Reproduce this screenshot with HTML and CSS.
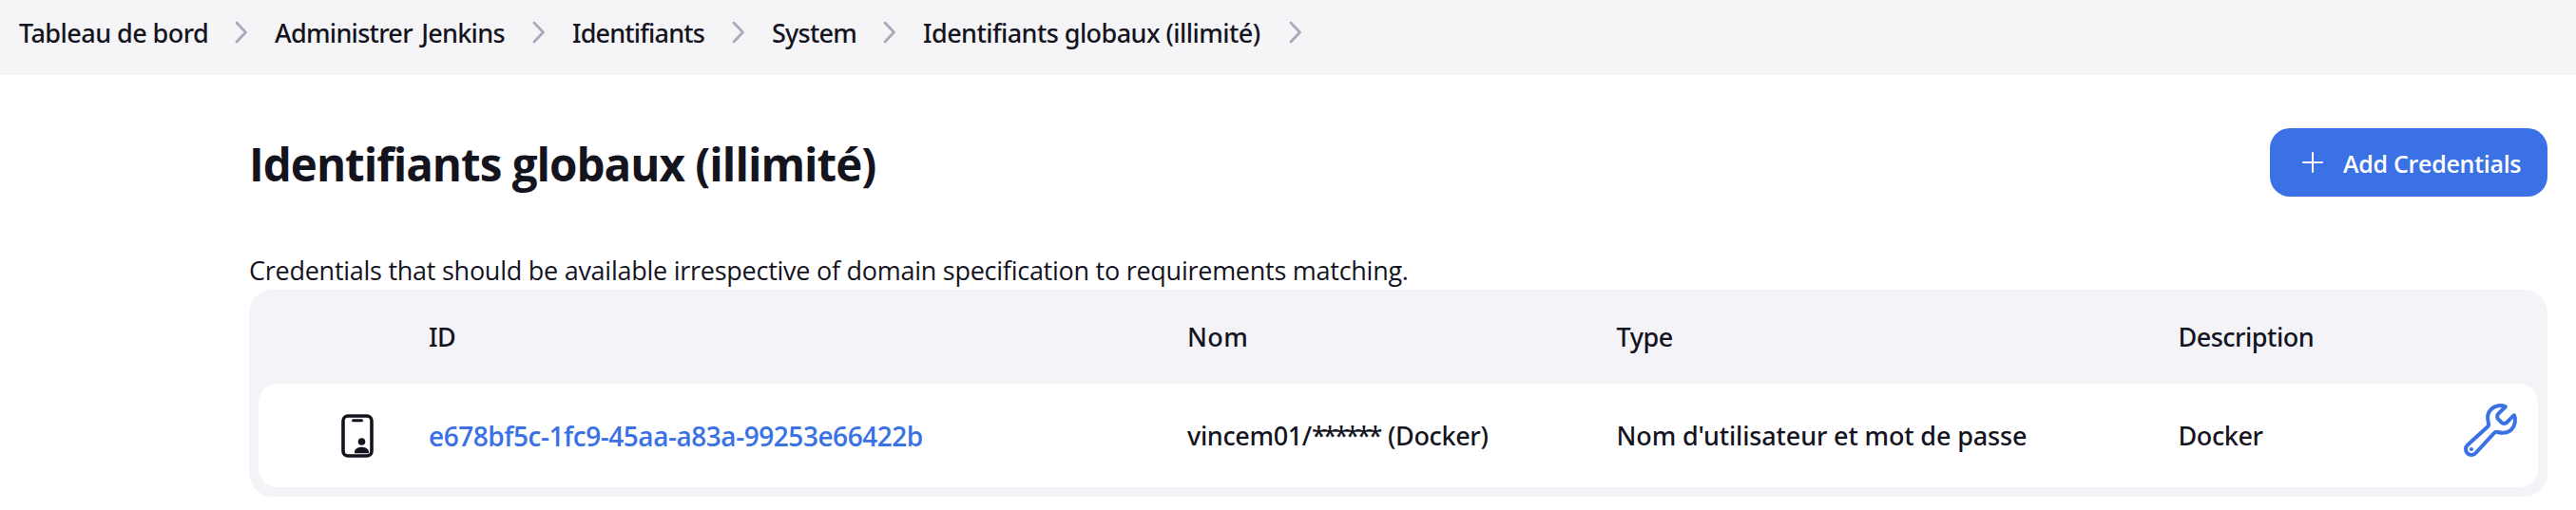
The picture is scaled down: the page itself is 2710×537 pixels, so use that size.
FILE: index.html
```
<!DOCTYPE html>
<html lang="fr">
<head>
<meta charset="utf-8">
<title>Identifiants globaux (illimité)</title>
<link rel="stylesheet" href="styles.css">
</head>
<body>
<nav class="crumbs">
  <a class="crumb crumb-home">Tableau de bord</a>
  <svg class="chevron" viewBox="0 0 14 24"><path d="M2 2l9.5 10L2 22"/></svg>
  <a class="crumb crumb-admin">Administrer Jenkins</a>
  <svg class="chevron" viewBox="0 0 14 24"><path d="M2 2l9.5 10L2 22"/></svg>
  <a class="crumb crumb-ids">Identifiants</a>
  <svg class="chevron" viewBox="0 0 14 24"><path d="M2 2l9.5 10L2 22"/></svg>
  <a class="crumb crumb-system">System</a>
  <svg class="chevron" viewBox="0 0 14 24"><path d="M2 2l9.5 10L2 22"/></svg>
  <a class="crumb crumb-global">Identifiants globaux (illimité)</a>
  <svg class="chevron" viewBox="0 0 14 24"><path d="M2 2l9.5 10L2 22"/></svg>
</nav>
<main class="page">
  <header class="app-bar">
    <h1 class="title">Identifiants globaux (illimité)</h1>
    <a class="button">
      <svg class="plus" viewBox="0 0 22 22"><path d="M11 1v20M1 11h20"/></svg>
      <span>Add Credentials</span>
    </a>
  </header>
  <p class="description">Credentials that should be available irrespective of domain specification to requirements matching.</p>
  <section class="table">
    <div class="row head">
      <span></span><span>ID</span><span class="nom">Nom</span><span>Type</span><span>Description</span><span></span>
    </div>
    <div class="row body">
      <svg class="credential" viewBox="0 0 34 46">
        <rect class="phone" x="2" y="2" width="30" height="42" rx="5"/>
        <rect x="11" y="5.3" width="12" height="3" rx="1.5"/>
        <circle cx="21.5" cy="29" r="3.8"/>
        <path d="M14 41.3v-1.3c0-3.2 3.2-5.3 7.5-5.3s7.5 2.1 7.5 5.3v1.3z"/>
      </svg>
      <a class="id">e678bf5c-1fc9-45aa-a83a-99253e66422b</a>
      <span class="user">vincem01/<span class="stars">******</span> (Docker)</span>
      <span class="type">Nom d'utilisateur et mot de passe</span>
      <span class="docker">Docker</span>
      <svg class="wrench" viewBox="0 0 512 512">
        <path d="M393.87 190a32.1 32.1 0 01-45.25 0l-26.57-26.57a32.09 32.09 0 010-45.26L382.19 58a1 1 0 00-.3-1.64c-38.82-16.64-89.15-8.16-121.11 23.57-30.58 30.35-32.32 76-21.12 115.84a31.93 31.93 0 01-9.06 32.08L64 380a48.17 48.17 0 1068 68l153.86-167a31.93 31.93 0 0131.6-9.13c39.54 10.59 84.54 8.6 114.72-21.19 32.49-32 39.5-88.56 23.75-120.93a1 1 0 00-1.6-.26z"/>
        <circle cx="96" cy="416" r="16"/>
      </svg>
    </div>
  </section>
</main>
</body>
</html>
```

FILE: styles.css
```
* { box-sizing: border-box; }
body {
  margin: 0;
  background: #fff;
  color: #14141f;
  font-family: "Open Sans", "Noto Sans", sans-serif;
  font-variant-ligatures: none;
  white-space: nowrap;
}
.crumbs {
  display: flex;
  align-items: center;
  height: 79px;
  padding: 0 0 11px 20px;
  background: #f5f5f8;
  font-family: "Noto Sans", sans-serif;
  font-size: 27px;
  font-weight: 500;
}
.crumb { line-height: 40px; flex: none; padding-top: 2px; }
.crumb-home { width: 227px; letter-spacing: -0.55px; }
.crumb-admin { width: 271px; letter-spacing: -0.72px; word-spacing: 3px; }
.crumb-ids { width: 168px; letter-spacing: -0.84px; }
.crumb-system { width: 117px; letter-spacing: -0.75px; }
.crumb-global { width: 385px; letter-spacing: -0.57px; }
.chevron {
  flex: none;
  width: 14px;
  height: 24px;
  margin-right: 28px;
  fill: none;
  stroke: #a9a9bd;
  stroke-width: 2.8;
  stroke-linecap: round;
  stroke-linejoin: round;
}
.page { padding: 56px 30px 0 262px; }
.app-bar { display: flex; justify-content: space-between; height: 72px; align-items: center; }
.title { margin: 0; padding-top: 4px; font-size: 47.5px; line-height: 72px; font-weight: 700; letter-spacing: -0.99px; }
.button {
  display: flex;
  align-items: center;
  width: 292px;
  height: 72px;
  padding: 0 0 0 34px;
  gap: 21px;
  border-radius: 21px;
  background: #3a72e6;
  color: #fff;
  font-size: 25px;
  font-weight: 600;
  letter-spacing: -0.29px;
}
.button span { padding-top: 2px; }
.plus { width: 22px; height: 22px; fill: none; stroke: #fff; stroke-width: 2; stroke-linecap: round; }
.description {
  margin: 59px 0 0;
  height: 39px;
  font-size: 27px;
  line-height: 38px;
  letter-spacing: -0.26px;
}
.table {
  height: 218px;
  padding: 0 10px 10px;
  border-radius: 25px;
  background: #f3f3f8;
  font-family: "Noto Sans", sans-serif;
  font-size: 27px;
  font-weight: 500;
}
.row {
  display: grid;
  grid-template-columns: 179px 798px 451.5px 591px 296px auto;
  align-items: center;
}
.head { height: 99px; letter-spacing: -0.5px; }
.head .nom { letter-spacing: 0.4px; }
.body { height: 109px; border-radius: 20px; background: #fff; }
.credential { width: 34px; height: 46px; margin-left: 87px; fill: #14141f; }
.phone { fill: none; stroke: #14141f; stroke-width: 3.6; }
.id { color: #3a72e6; font-family: "Open Sans", sans-serif; font-size: 28px; font-weight: 600; letter-spacing: -0.46px; }
.user { letter-spacing: -0.35px; }
.stars { letter-spacing: -2.9px; margin-right: 2px; }
.type { letter-spacing: -0.15px; }
.docker { letter-spacing: -0.4px; }
.wrench { width: 64px; height: 64px; margin-top: -11px; fill: none; stroke: #3a72e6; stroke-width: 32; stroke-linecap: round; stroke-linejoin: round; }
.wrench circle { fill: #3a72e6; stroke: none; }
```
